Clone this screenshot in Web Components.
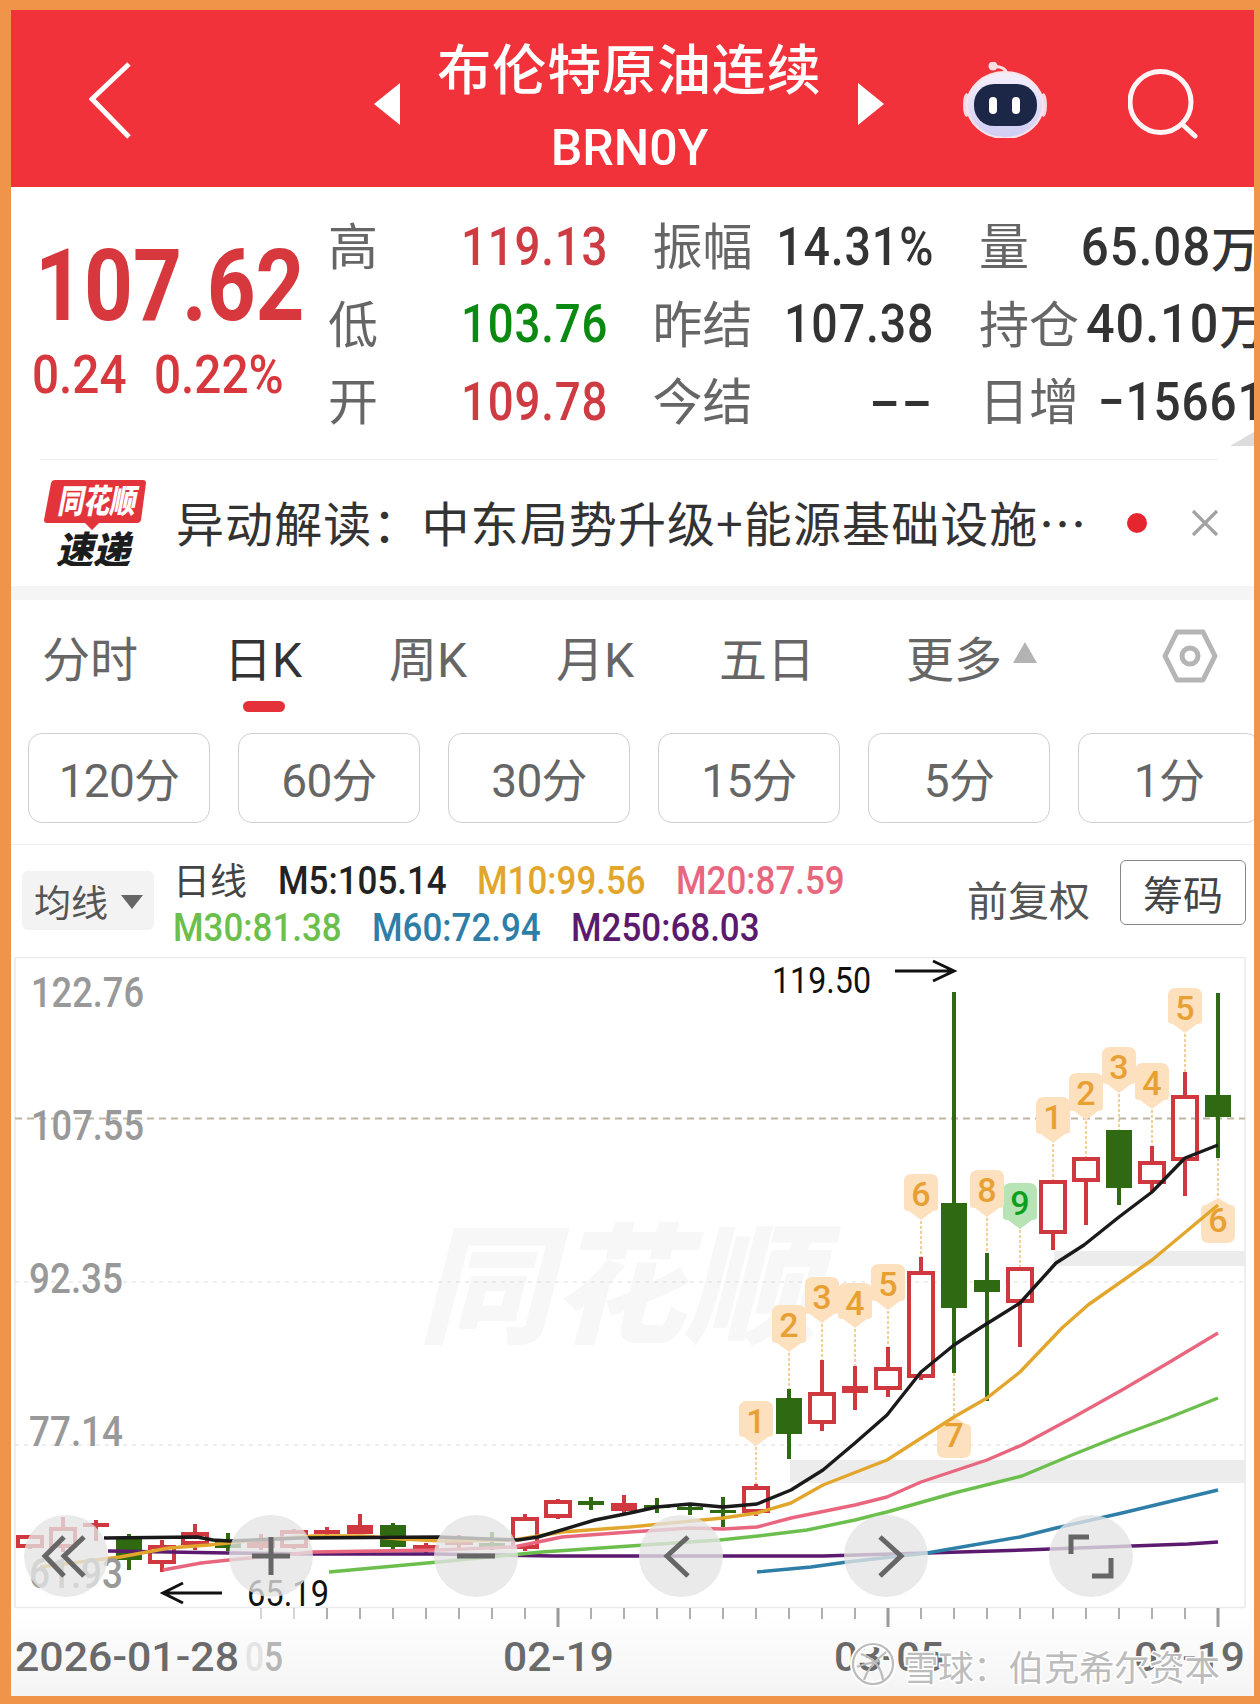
<!DOCTYPE html>
<html lang="zh">
<head>
<meta charset="utf-8">
<title>布伦特原油连续</title>
<style>
    html, body { margin: 0; padding: 0; }
    body {
        --cjk: "Noto Sans CJK SC", "Noto Sans", sans-serif;
        --num: Roboto, "Noto Sans CJK SC", sans-serif;
        --red: #d6383e;
        font-family: var(--cjk);
    }
</style>
</head>
<body>
<app-frame>
    <top-bar title="布伦特原油连续" code="BRN0Y"></top-bar>
    <quote-panel></quote-panel>
    <news-strip>异动解读：中东局势升级+能源基础设施…</news-strip>
    <period-tabs></period-tabs>
    <interval-pills></interval-pills>
    <ma-legend></ma-legend>
    <kline-chart></kline-chart>
</app-frame>

<script>
class AppFrame extends HTMLElement {
    constructor() {
        super();
        this.shadow = this.attachShadow({ mode: 'open' });
        this.shadow.innerHTML = `
            <style>
                :host {
                    display: block;
                    width: 1260px;
                    height: 1704px;
                    box-sizing: border-box;
                    padding: 10px 6px 8px 11px;
                    background: #ef9449;
                    overflow: hidden;
                }
                .inner {
                    display: flex;
                    flex-direction: column;
                    height: 100%;
                    background: #fff;
                    overflow: hidden;
                }
            </style>
            <div class="inner"><slot></slot></div>
        `;
    }
}

class TopBar extends HTMLElement {
    constructor() {
        super();
        this.shadow = this.attachShadow({ mode: 'open' });
    }

    connectedCallback() {
        this.shadow.innerHTML = `
            <style>
                :host {
                    display: grid;
                    grid-template-columns: 363px 26px 458px 26px 79px 84px 81px 66px;
                    align-items: center;
                    height: 177px;
                    background: #f1323b;
                    color: #fff;
                    flex: none;
                }
                .back { margin-left: 78px; display: block; margin-top: 5px; }
                .mid { text-align: center; padding: 14px 0 0 1px; }
                .name { font-size: 54px; font-weight: 500; line-height: 64px; letter-spacing: .9px; }
                .code { font: 500 50px/56px Roboto, sans-serif; margin-top: 21px; }
                svg { display: block; }
                .tri { margin-top: 11px; }
                .robot { grid-column: 6; margin-top: 2px; }
                .search { grid-column: 8; margin-top: 9px; }
            </style>
            <svg class="back" width="44" height="80" viewBox="0 0 44 80" fill="none" stroke="#fff" stroke-width="5">
                <path d="M40 3 L3 38 L40 76"/>
            </svg>
            <svg class="tri" width="26" height="42" viewBox="0 0 26 42"><path d="M26 0V42L0 21Z" fill="#fff"/></svg>
            <div class="mid">
                <div class="name">${this.getAttribute('title')}</div>
                <div class="code">${this.getAttribute('code')}</div>
            </div>
            <svg class="tri" width="26" height="42" viewBox="0 0 26 42"><path d="M0 0V42L26 21Z" fill="#fff"/></svg>
            <svg class="robot" width="84" height="76" viewBox="0 0 84 76">
                <defs>
                    <linearGradient id="shell" x1="0" y1="0" x2="0" y2="1">
                        <stop offset="0" stop-color="#f5effb"/><stop offset="1" stop-color="#cfcdf4"/>
                    </linearGradient>
                </defs>
                <path d="M31 5 C36 4 43 6 44 12" fill="none" stroke="#fbdfe2" stroke-width="3"/>
                <circle cx="30" cy="4" r="4.5" fill="#fbdfe2"/>
                <ellipse cx="3.5" cy="43" rx="3.5" ry="12" fill="#f3d9e6"/>
                <ellipse cx="80.5" cy="43" rx="3.5" ry="12" fill="#f3d9e6"/>
                <ellipse cx="42" cy="43" rx="38" ry="33" fill="url(#shell)" stroke="#fbe3e8" stroke-width="2"/>
                <rect x="11" y="22" width="63" height="42" rx="20" fill="#1c2747"/>
                <rect x="26" y="35" width="8" height="17" rx="4" fill="#fff"/>
                <rect x="49" y="35" width="8" height="17" rx="4" fill="#fff"/>
            </svg>
            <svg class="search" width="70" height="74" viewBox="0 0 70 74" fill="none" stroke="#fff5f5" stroke-width="5">
                <circle cx="32.5" cy="36" r="30.5"/>
                <path d="M55 59 L67 70" stroke-linecap="round"/>
            </svg>
        `;
    }
}

class StatCell extends HTMLElement {
    constructor() {
        super();
        this.shadow = this.attachShadow({ mode: 'open' });
    }

    connectedCallback() {
        const tone = { red: '#cf3b42', green: '#0b8a12' }[this.getAttribute('tone')] || '#333';
        const sx = this.getAttribute('sx') || '.877';
        this.shadow.innerHTML = `
            <style>
                :host { display: flex; justify-content: space-between; align-items: center; white-space: nowrap; min-width: 0; }
                .l { font-size: 50px; color: #666; line-height: 56px; margin: -5px 0 0 -2px; }
                .r { display: flex; align-items: center; margin-right: -1px; }
                .v {
                    display: inline-block;
                    font: 500 53px/56px var(--num);
                    letter-spacing: 1px;
                    color: ${tone};
                    transform: scaleX(${sx});
                    transform-origin: right center;
                    padding-top: 2px;
                }
                ::slotted(span) { font: 500 48px/56px var(--cjk); color: #333; margin-right: -4px; }
            </style>
            <span class="l">${this.getAttribute('label')}</span>
            <span class="r"><span class="v">${this.getAttribute('value')}</span><slot></slot></span>
        `;
    }
}

class QuotePanel extends HTMLElement {
    constructor() {
        super();
        this.shadow = this.attachShadow({ mode: 'open' });
        this.shadow.innerHTML = `
            <style>
                :host { display: flex; height: 273px; flex: none; box-sizing: border-box; position: relative; overflow: hidden; }
                .px { width: 319px; flex: none; color: var(--red); padding: 49px 0 0 24px; box-sizing: border-box; }
                .big {
                    font: bold 101px/100px var(--num);
                    transform: scaleX(.845);
                    transform-origin: left center;
                    white-space: nowrap;
                }
                .sub { margin: 11px 0 0 -3px; display: flex; font: 500 53px/56px var(--num); }
                .sub span { display: block; transform: scaleX(.9); transform-origin: left center; white-space: nowrap; }
                .sub span:first-child { width: 122px; flex: none; }
                .grid {
                    display: grid;
                    grid-template-columns: 277px 279px 273px;
                    column-gap: 47.5px;
                    grid-auto-rows: 77.5px;
                    padding-top: 20px;
                    align-content: start;
                }
                .rule { position: absolute; left: 29px; right: 36px; bottom: 0; height: 1px; background: #eee; }
                .corner { position: absolute; right: 0; bottom: 14px; width: 0; height: 0; border-style: solid; border-width: 0 0 14px 24px; border-color: transparent transparent #dcdcdc transparent; }
            </style>
            <div class="px">
                <div class="big">107.62</div>
                <div class="sub"><span>0.24</span><span>0.22%</span></div>
            </div>
            <div class="grid">
                <stat-cell label="高" value="119.13" tone="red" sx=".86"></stat-cell>
                <stat-cell label="振幅" value="14.31%"></stat-cell>
                <stat-cell label="量" value="65.08" sx=".93"><span>万</span></stat-cell>
                <stat-cell label="低" value="103.76" tone="green" sx=".86"></stat-cell>
                <stat-cell label="昨结" value="107.38"></stat-cell>
                <stat-cell label="持仓" value="40.10" sx=".95"><span>万</span></stat-cell>
                <stat-cell label="开" value="109.78" tone="red" sx=".86"></stat-cell>
                <stat-cell label="今结" value="--" sx="1.7"></stat-cell>
                <stat-cell label="日增" value="−15661" sx=".9" style="margin-right:-2px"></stat-cell>
            </div>
            <div class="rule"></div>
            <div class="corner"></div>
        `;
    }
}

class NewsStrip extends HTMLElement {
    constructor() {
        super();
        this.shadow = this.attachShadow({ mode: 'open' });
        this.shadow.innerHTML = `
            <style>
                :host {
                    display: flex;
                    align-items: center;
                    height: 140px;
                    box-sizing: border-box;
                    border-bottom: 14px solid #f5f5f5;
                    flex: none;
                    padding-left: 33px;
                }
                svg { display: block; flex: none; }
                .logo { width: 102px; height: 86px; margin-right: 30px; }
                .txt { font-size: 48px; letter-spacing: 1.1px; color: #333; white-space: nowrap; width: 933px; flex: none; margin-top: -4px; }
                .dot { width: 20px; height: 20px; border-radius: 50%; background: #e5262e; flex: none; margin-right: 43px; margin-left: 18px; }
                .tag { font: italic 900 33px/1 var(--cjk); fill: #fff; }
                .su { font: italic 900 38px/1 var(--cjk); fill: #1d1d1d; }
            </style>
            <svg class="logo" viewBox="0 0 102 86">
                <path d="M7 3 Q8 0 11 0 H99 Q102 0 102 3 L97 40 Q96 43 93 43 H55 L48 50 L41 43 H3 Q0 43 0 40 Z" fill="#e3343b"/>
                <text class="tag" x="52" y="33" text-anchor="middle" textLength="78" lengthAdjust="spacingAndGlyphs">同花顺</text>
                <text class="su" x="49" y="84" text-anchor="middle" textLength="74" lengthAdjust="spacingAndGlyphs">速递</text>
            </svg>
            <span class="txt"><slot></slot></span>
            <span class="dot"></span>
            <svg width="30" height="30" viewBox="0 0 30 30" stroke="#a3a3a3" stroke-width="3.2"><path d="M3 3 L27 27 M27 3 L3 27"/></svg>
        `;
    }
}

class PeriodTabs extends HTMLElement {
    constructor() {
        super();
        this.shadow = this.attachShadow({ mode: 'open' });
        this.shadow.innerHTML = `
            <style>
                :host {
                    display: grid;
                    grid-template-columns: 182px 165px 167px 163px 187px 223px 1fr;
                    height: 133px;
                    flex: none;
                    padding: 29px 0 0 31px;
                    box-sizing: border-box;
                    align-items: start;
                    color: #666;
                    font-size: 48px;
                    line-height: 54px;
                }
                .on { color: #333; position: relative; }
                .on::after {
                    content: '';
                    position: absolute;
                    left: 19px;
                    top: 72px;
                    width: 42px;
                    height: 11px;
                    border-radius: 6px;
                    background: #e5323a;
                }
                .k { font-family: Roboto, sans-serif; }
                .more { display: flex; align-items: center; white-space: nowrap; }
                .more i { margin: -8px 0 0 11px; width: 0; height: 0; border-style: solid; border-width: 0 12px 21px; border-color: transparent transparent #b3b3b3; }
                svg { display: block; margin: 0 0 0 33px; }
            </style>
            <span>分时</span>
            <span class="on">日<span class="k">K</span></span>
            <span>周<span class="k">K</span></span>
            <span>月<span class="k">K</span></span>
            <span>五日</span>
            <span class="more">更多<i></i></span>
            <svg width="56" height="54" viewBox="0 0 56 54" fill="none" stroke="#b5b5b5" stroke-width="5">
                <path d="M15 3 H41 L53 27 L41 51 H15 L3 27 Z" stroke-linejoin="round"/>
                <circle cx="28" cy="27" r="8"/>
            </svg>
        `;
    }
}

class IntervalPills extends HTMLElement {
    constructor() {
        super();
        this.shadow = this.attachShadow({ mode: 'open' });
        const items = ['120分', '60分', '30分', '15分', '5分', '1分'];
        this.shadow.innerHTML = `
            <style>
                :host {
                    display: flex;
                    gap: 28px;
                    height: 112px;
                    flex: none;
                    padding-left: 17px;
                    box-sizing: border-box;
                    border-bottom: 1px solid #eee;
                    overflow: hidden;
                    align-items: flex-start;
                }
                span {
                    flex: none;
                    width: 182px;
                    height: 90px;
                    box-sizing: border-box;
                    border: 1.5px solid #cfcfcf;
                    border-radius: 14px;
                    display: flex;
                    align-items: center;
                    justify-content: center;
                    padding-bottom: 2px;
                    font: 46px Roboto, var(--cjk);
                    color: #666;
                    letter-spacing: -.8px;
                }
            </style>
            ${items.map(t => `<span>${t}</span>`).join('')}
        `;
    }
}

class MaLegend extends HTMLElement {
    constructor() {
        super();
        this.shadow = this.attachShadow({ mode: 'open' });
        this.shadow.innerHTML = `
            <style>
                :host { display: block; height: 112px; flex: none; position: relative; }
                .wrap { display: flex; height: 100%; padding-left: 11px; box-sizing: border-box; }
                .drop {
                    width: 132px; height: 59px; margin-top: 26px; flex: none;
                    background: #f3f3f3; border-radius: 6px; display: flex; align-items: center;
                    padding-left: 12px; box-sizing: border-box;
                    font-size: 37px; color: #555; white-space: nowrap;
                }
                .drop i { margin: 3px 0 0 13px; width: 0; height: 0; border-style: solid; border-width: 14px 11px 0; border-color: #666 transparent transparent; }
                .rows { margin-left: 19px; flex: none; padding-top: 13px; width: 794px; }
                .row { display: flex; align-items: center; height: 47px; white-space: nowrap; }
                .m {
                    display: inline-block;
                    font: 500 38px/47px var(--num);
                    transform: scaleX(.92);
                    transform-origin: left center;
                }
                .c { flex: none; width: 199px; }
                .d { font-size: 37px; color: #444; width: 105px; flex: none; margin: -6px 0 0 0; }
                .right { display: flex; align-items: flex-start; }
                .fq { font-size: 41px; line-height: 48px; color: #555; margin-top: 29px; white-space: nowrap; }
                .chip { margin: 15px 0 0 30px; width: 126px; height: 65px; flex: none; box-sizing: border-box; border: 1.5px solid #888; border-radius: 6px; font-size: 40px; color: #444; display: flex; align-items: center; justify-content: center; }
            </style>
            <div class="wrap">
                <div class="drop">均线<i></i></div>
                <div class="rows">
                    <div class="row">
                        <span class="d">日线</span>
                        <span class="c"><span class="m" style="color:#222">M5:105.14</span></span>
                        <span class="c"><span class="m" style="color:#e3a62c">M10:99.56</span></span>
                        <span class="c"><span class="m" style="color:#e8677f">M20:87.59</span></span>
                    </div>
                    <div class="row">
                        <span class="c"><span class="m" style="color:#6cbf4d">M30:81.38</span></span>
                        <span class="c"><span class="m" style="color:#2e7ea8">M60:72.94</span></span>
                        <span class="c"><span class="m" style="color:#5b1a6e">M250:68.03</span></span>
                    </div>
                </div>
                <div class="right">
                    <span class="fq">前复权</span>
                    <span class="chip">筹码</span>
                </div>
            </div>
        `;
    }
}

// [k, kind, wickTop, bodyTop, bodyBottom, wickBottom]  k = candles counted from the right
// kind: h hollow red, r filled red, g filled green
const CANDLES = [
    [0, 'g', 993, 1095, 1117, 1158], [1, 'h', 1072, 1095, 1161, 1196], [2, 'h', 1146, 1161, 1184, 1192],
    [3, 'g', 1130, 1130, 1188, 1205], [4, 'h', 1157, 1157, 1182, 1225], [5, 'h', 1180, 1180, 1234, 1250],
    [6, 'h', 1267, 1267, 1303, 1347], [7, 'g', 1253, 1280, 1292, 1401], [8, 'g', 992, 1203, 1308, 1373],
    [9, 'h', 1257, 1271, 1378, 1380], [10, 'h', 1347, 1367, 1390, 1397], [11, 'r', 1366, 1386, 1393, 1410],
    [12, 'h', 1360, 1392, 1424, 1431], [13, 'g', 1389, 1398, 1434, 1459], [14, 'h', 1484, 1486, 1513, 1516],
    [15, 'g', 1497, 1510, 1513, 1527], [16, 'g', 1503, 1507, 1510, 1515], [17, 'g', 1498, 1505, 1508, 1513],
    [18, 'r', 1495, 1503, 1511, 1513], [19, 'g', 1497, 1501, 1505, 1510], [20, 'h', 1499, 1500, 1518, 1519],
    [21, 'h', 1514, 1517, 1549, 1551], [22, 'g', 1532, 1543, 1548, 1550], [23, 'h', 1535, 1537, 1545, 1548],
    [24, 'r', 1543, 1545, 1550, 1553], [25, 'g', 1523, 1525, 1547, 1550], [26, 'r', 1514, 1525, 1534, 1534],
    [27, 'r', 1527, 1530, 1534, 1536], [28, 'h', 1529, 1530, 1548, 1549], [29, 'h', 1534, 1541, 1548, 1550],
    [30, 'g', 1533, 1540, 1548, 1551], [31, 'h', 1524, 1532, 1545, 1550], [32, 'h', 1540, 1545, 1564, 1572],
    [33, 'g', 1534, 1539, 1560, 1570], [34, 'r', 1520, 1523, 1527, 1541], [35, 'h', 1517, 1527, 1548, 1552],
    [36, 'h', 1535, 1535, 1548, 1549]
];

// up pins: [k, digit, top, tip, end of the dashes]   down pins: [k, digit, tip, bottom, start of the dashes]
const PINS_UP = [
    [1, 5, 988, 1033, 1072], [2, 4, 1063, 1109, 1146], [3, 3, 1047, 1093, 1130], [4, 2, 1073, 1120, 1157],
    [5, 1, 1097, 1143, 1180], [6, 9, 1183, 1229, 1267], [7, 8, 1170, 1217, 1253], [9, 6, 1174, 1220, 1257],
    [10, 5, 1264, 1310, 1347], [11, 4, 1283, 1328, 1366], [12, 3, 1277, 1323, 1360], [13, 2, 1305, 1352, 1389],
    [14, 1, 1401, 1446, 1484]
];
const PINS_DOWN = [[0, 6, 1198, 1243, 1158], [8, 7, 1417, 1458, 1373]];

const LINES = [
    ['#5b1a6e', 3.6, [[108,1551],[229,1553],[313,1554],[434,1554],[554,1556],[823,1556],[927,1553],[1024,1550],[1132,1546],[1188,1544],[1218,1542]]],
    ['#2e7ea8', 3.4, [[757,1572],[811,1567],[847,1562],[927,1553],[1020,1537],[1056,1528],[1122,1513],[1218,1490]]],
    ['#6cbf4d', 3.4, [[329,1572],[438,1562],[542,1552],[630,1546],[720,1540],[758,1536],[807,1530],[855,1520],[887,1512],[954,1493],[1022,1476],[1072,1455],[1122,1435],[1168,1418],[1218,1398]]],
    ['#e8677f', 3.4, [[163,1570],[201,1563],[229,1560],[313,1552],[438,1550],[514,1547],[562,1537],[630,1532],[690,1528],[723,1529],[757,1527],[791,1518],[855,1505],[887,1497],[921,1482],[987,1460],[1022,1445],[1072,1418],[1122,1390],[1168,1363],[1218,1333]]],
    ['#e3a62c', 3.4, [[40,1567],[120,1557],[169,1548],[209,1545],[257,1540],[313,1536],[362,1536],[402,1539],[442,1541],[514,1540],[562,1532],[630,1527],[723,1518],[757,1513],[791,1503],[823,1485],[887,1460],[954,1417],[987,1398],[1020,1372],[1062,1328],[1088,1305],[1152,1260],[1218,1205]]],
    ['#1a1a1a', 3.4, [[104,1538],[197,1537],[213,1540],[229,1541],[300,1538],[438,1537],[518,1540],[538,1537],[595,1520],[630,1513],[657,1507],[690,1504],[723,1507],[757,1504],[791,1490],[823,1470],[855,1443],[887,1415],[921,1372],[954,1345],[980,1328],[1020,1303],[1056,1263],[1084,1245],[1119,1217],[1152,1192],[1185,1158],[1218,1145]]]
];

const kx = k => 1218 - 33 * k;

class KlineChart extends HTMLElement {
    constructor() {
        super();
        this.shadow = this.attachShadow({ mode: 'open' });
        this.shadow.innerHTML = `
            <style>
                :host { display: block; flex: none; height: 739px; }
                svg { display: block; }
                .ax { font-family: var(--num); font-size: 42px; font-weight: 500; fill: #999; }
                .date { font-family: var(--num); font-size: 41px; font-weight: 500; fill: #6a6a6a; }
                .note { font-family: var(--num); font-size: 37px; fill: #111; }
                .pin { font-family: Roboto, sans-serif; font-size: 34px; font-weight: 500; text-anchor: middle; }
                .wm { font-family: var(--cjk); font-size: 130px; font-weight: 900; font-style: italic; fill: #f7f7f7; }
                .snow { font-family: var(--cjk); font-size: 35.5px; fill: #bcbcbc; stroke: #fff; stroke-width: 3px; paint-order: stroke; }
            </style>
            <svg width="1243" height="739" viewBox="11 957 1243 739">
                <defs>
                    <linearGradient id="foot" x1="0" y1="0" x2="0" y2="1">
                        <stop offset="0" stop-color="#fff"/><stop offset="1" stop-color="#f4f4f4"/>
                    </linearGradient>
                </defs>
                ${this.frame()}
                ${this.candles()}
                ${this.pins()}
                ${this.lines()}
                ${this.labels()}
                ${this.controls()}
                ${this.axis()}
            </svg>
        `;
    }

    frame() {
        return `
            <rect x="11" y="1607" width="1243" height="89" fill="url(#foot)"/>
            <rect x="15" y="957.5" width="1230" height="650" fill="none" stroke="#eaeaea" stroke-width="1.5"/>
            <text class="wm" x="418" y="1333" textLength="400" lengthAdjust="spacingAndGlyphs">同花顺</text>
            <rect x="1054" y="1251" width="191" height="15" fill="#ececec"/>
            <rect x="790" y="1460" width="455" height="23" fill="#ececec"/>
            <path d="M15 1282H1245M15 1445H1245" stroke="#dedede" stroke-width="1.2" stroke-dasharray="4 5"/>
            <path d="M15 1118.5H1245" stroke="#bdb5a2" stroke-width="2" stroke-dasharray="7 5"/>
        `;
    }

    candles() {
        return `<clipPath id="plot"><rect x="15" y="957" width="1230" height="650"/></clipPath><g clip-path="url(#plot)">` + CANDLES.map(([k, kind, wt, bt, bb, wb]) => {
            const x = kx(k);
            const c = kind === 'g' ? '#2f6a12' : '#d0383f';
            const wick = `<path d="M${x} ${wt}V${bt}M${x} ${bb}V${wb}" stroke="${c}" stroke-width="4"/>`;
            if (kind === 'h') {
                return wick + `<rect x="${x - 12}" y="${bt + 2}" width="24" height="${Math.max(bb - bt - 4, 1)}" fill="none" stroke="${c}" stroke-width="4"/>`;
            }
            return wick + `<rect x="${x - 13}" y="${bt}" width="26" height="${bb - bt}" fill="${c}"/>`;
        }).join('') + `</g>`;
    }

    pins() {
        const up = PINS_UP.map(([k, n, top, tip, end]) => {
            const x = kx(k);
            const bg = n === 9 ? '#b7e3b5' : '#fde0bd';
            const fg = n === 9 ? '#0aa01e' : '#e8a033';
            const b = tip - 9;
            return `<path d="M${x} ${tip + 1}V${end}" stroke="#e8a033" stroke-width="1" stroke-dasharray="3 2"/>
                <path d="M${x - 17} ${top + 8}Q${x - 17} ${top} ${x - 9} ${top}H${x + 9}Q${x + 17} ${top} ${x + 17} ${top + 8}V${b - 3}Q${x + 17} ${b} ${x + 12} ${b}L${x} ${tip}L${x - 12} ${b}Q${x - 17} ${b} ${x - 17} ${b - 3}Z" fill="${bg}"/>
                <text class="pin" x="${x}" y="${top + 32}" fill="${fg}">${n}</text>`;
        });
        const down = PINS_DOWN.map(([k, n, tip, bot, start]) => {
            const x = kx(k);
            const t = tip + 7;
            return `<path d="M${x} ${start}V${tip}" stroke="#e8a033" stroke-width="1" stroke-dasharray="3 2"/>
                <path d="M${x} ${tip}L${x + 12} ${t}Q${x + 17} ${t} ${x + 17} ${t + 5}V${bot - 8}Q${x + 17} ${bot} ${x + 9} ${bot}H${x - 9}Q${x - 17} ${bot} ${x - 17} ${bot - 8}V${t + 5}Q${x - 17} ${t} ${x - 12} ${t}Z" fill="#fde0bd"/>
                <text class="pin" x="${x}" y="${bot - 11}" fill="#e8a033">${n}</text>`;
        });
        return up.join('') + down.join('');
    }

    lines() {
        return LINES.map(([c, w, pts]) =>
            `<polyline points="${pts.map(p => p.join(',')).join(' ')}" fill="none" stroke="${c}" stroke-width="${w}" stroke-linejoin="round"/>`
        ).join('');
    }

    labels() {
        const squeeze = 'lengthAdjust="spacingAndGlyphs"';
        return `
            <text class="ax" x="31" y="1007" textLength="113" ${squeeze}>122.76</text>
            <text class="ax" x="31" y="1140" textLength="113" ${squeeze}>107.55</text>
            <text class="ax" x="29" y="1293" textLength="94" ${squeeze}>92.35</text>
            <text class="ax" x="29" y="1446" textLength="94" ${squeeze}>77.14</text>
            <text class="ax" x="29" y="1588" textLength="94" ${squeeze}>61.93</text>
            <text class="note" x="772" y="993" textLength="99" ${squeeze}>119.50</text>
            <path d="M895 971H954M933 961L954 971L933 981" fill="none" stroke="#111" stroke-width="3"/>
            <path d="M222 1593H163M183 1583L163 1593L183 1603" fill="none" stroke="#111" stroke-width="3"/>
            <text class="note" x="247" y="1606" textLength="82" ${squeeze}>65.19</text>
        `;
    }

    controls() {
        const centers = [66, 271, 476, 681, 886, 1091];
        const icons = `
            <path d="M64 1537L45 1556L64 1576M84 1537L64 1556L84 1576"/>
            <path d="M271 1537V1575M252 1556H290"/>
            <path d="M457 1556H495"/>
            <path d="M688 1537L667 1556L688 1576"/>
            <path d="M880 1537L901 1556L880 1576"/>
            <path d="M1089 1537H1071V1554M1092 1576H1111V1558"/>
        `;
        return centers.map(cx => `<ellipse cx="${cx}" cy="1556" rx="42" ry="41" fill="#e4e4e4" fill-opacity=".78"/>`).join('') +
            `<g fill="none" stroke="#666" stroke-width="5">${icons}</g>`;
    }

    axis() {
        const squeeze = 'lengthAdjust="spacingAndGlyphs"';
        let ticks = '';
        for (let k = 0; k <= 29; k++) {
            const major = k % 10 === 0;
            ticks += `<path d="M${kx(k)} 1608V${major ? 1627 : 1619}" stroke="#9a9a9a" stroke-width="${major ? 3 : 1.6}" stroke-opacity="${k > 27 ? .5 : 1}"/>`;
        }
        return ticks + `
            <text class="date" x="15" y="1671" textLength="224" ${squeeze}>2026-01-28</text>
            <text class="date" x="245" y="1671" textLength="38" ${squeeze} style="fill:#b5b5b5"><tspan style="fill:#e4e4e4">0</tspan>5</text>
            <text class="date" x="503" y="1671" textLength="111" ${squeeze}>02-19</text>
            <text class="date" x="834" y="1671" textLength="110" ${squeeze}>03-05</text>
            <text class="date" x="1134" y="1671" textLength="111" ${squeeze}>03-19</text>
            <g fill="none" stroke="#fff" stroke-width="6"><circle cx="873" cy="1664" r="20"/></g>
            <g fill="none" stroke="#bcbcbc" stroke-width="2.2">
                <circle cx="873" cy="1664" r="20"/>
                <path d="M861 1654C871 1657 881 1665 883 1680M886 1652C877 1659 867 1669 864 1680M857 1667C865 1663 873 1663 879 1661"/>
            </g>
            <text class="snow" x="903" y="1681" textLength="317">雪球：伯克希尔资本</text>
        `;
    }
}

customElements.define('app-frame', AppFrame);
customElements.define('top-bar', TopBar);
customElements.define('stat-cell', StatCell);
customElements.define('quote-panel', QuotePanel);
customElements.define('news-strip', NewsStrip);
customElements.define('period-tabs', PeriodTabs);
customElements.define('interval-pills', IntervalPills);
customElements.define('ma-legend', MaLegend);
customElements.define('kline-chart', KlineChart);
</script>
</body>
</html>
